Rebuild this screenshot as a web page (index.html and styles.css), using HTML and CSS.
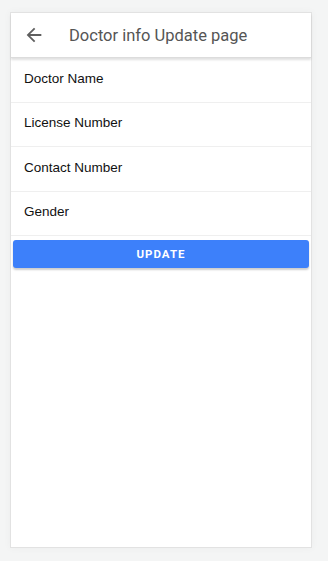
FILE: index.html
```html
<!DOCTYPE html>
<html>
<head>
<meta charset="utf-8">
<link rel="stylesheet" href="styles.css">
</head>
<body>
<div class="card">
  <header class="bar">
    <svg class="back" viewBox="0 0 24 24" width="22" height="22"><path d="M20 11H7.83l5.59-5.59L12 4l-8 8 8 8 1.41-1.41L7.83 13H20v-2z" fill="#5f5f5f"/></svg>
    <h1 class="title">Doctor info Update page</h1>
  </header>
  <ul class="list">
    <li class="row">Doctor Name</li>
    <li class="row">License Number</li>
    <li class="row">Contact Number</li>
    <li class="row">Gender</li>
  </ul>
  <button class="btn">UPDATE</button>
</div>
</body>
</html>
```
FILE: styles.css
```css
html, body { margin: 0; padding: 0; }
body {
  background: #f4f5f5;
  width: 328px;
  height: 561px;
  font-family: Roboto, "Liberation Sans", Arial, sans-serif;
  padding-top: 12px;
  box-sizing: border-box;
}
.card {
  margin-left: 10px;
  width: 302px;
  height: 536px;
  box-sizing: border-box;
  background: #fff;
  border: 1px solid #e2e2e2;
  box-shadow: 0 0 8px rgba(0,0,0,0.04);
  display: flex;
  flex-direction: column;
}
.bar {
  height: 45px;
  box-sizing: border-box;
  display: flex;
  align-items: center;
  box-shadow: 0 2px 2px rgba(0,0,0,0.12);
  border-bottom: 1px solid #dcdcdc;
  position: relative;
  z-index: 1;
}
.back { margin-left: 12px; flex: none; }
.title {
  margin: 0 0 0 24px;
  font-weight: 400;
  font-size: 16.5px;
  color: #555;
}
.list { list-style: none; margin: 0; padding: 0; }
.row {
  height: 44.5px;
  box-sizing: border-box;
  border-bottom: 1px solid #efefef;
  padding: 12.5px 0 0 13px;
  font-size: 13.5px;
  line-height: 16px;
  color: #111;
  font-family: "Liberation Sans", Arial, sans-serif;
}
.btn {
  margin: 4px 2px 0 2px;
  height: 28px;
  border: none;
  border-radius: 3px;
  background: #3d80fa;
  color: #fff;
  font-family: Roboto, "Liberation Sans", sans-serif;
  font-weight: 700;
  font-size: 11.5px;
  letter-spacing: 1px;
  box-shadow: 0 2px 2px rgba(0,0,0,0.2);
  padding: 0;
}
```
